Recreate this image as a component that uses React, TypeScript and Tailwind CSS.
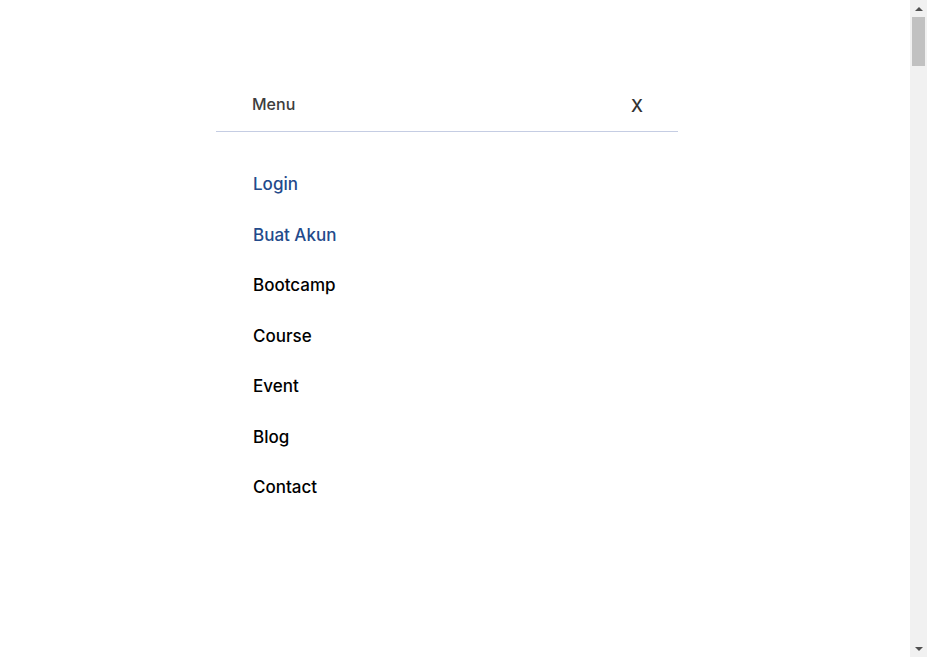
import React from "react";

const items = [
  { label: "Login", accent: true },
  { label: "Buat Akun", accent: true },
  { label: "Bootcamp", accent: false },
  { label: "Course", accent: false },
  { label: "Event", accent: false },
  { label: "Blog", accent: false },
  { label: "Contact", accent: false },
];

const Scrollbar = () => (
  <div className="w-[17px] h-full bg-[#f1f1f1] flex flex-col items-center">
    <div className="h-[17px] flex items-center justify-center">
      <div className="w-0 h-0 border-l-[4px] border-r-[4px] border-b-[4px] border-l-transparent border-r-transparent border-b-[#505050]" />
    </div>
    <div className="w-[13px] h-[49px] bg-[#c1c1c1]" />
    <div className="flex-1" />
    <div className="h-[17px] flex items-center justify-center">
      <div className="w-0 h-0 border-l-[4px] border-r-[4px] border-t-[4px] border-l-transparent border-r-transparent border-t-[#505050]" />
    </div>
  </div>
);

const App = () => {
  return (
    <div className="h-screen flex bg-white font-['Inter','Noto_Sans',sans-serif] overflow-hidden">
      <div className="flex-1 pt-[80px] pl-[216px]">
        <div className="w-[462px]">
          <div className="flex items-center justify-between h-[52px] px-[36px] border-b border-b-[#c5cde3]">
            <span className="text-[16px] font-medium text-[#3d3d3d] -mt-[4px]">Menu</span>
            <button className="text-[17px] font-medium text-[#333] leading-none mt-[2px] -mr-[1px]">X</button>
          </div>
          <ul className="flex flex-col gap-[26.5px] pt-[40px] px-[37px]">
            {items.map((item) => (
              <li
                key={item.label}
                className={`text-[17px] leading-6 font-medium ${item.accent ? "text-[#234a8b]" : "text-black"}`}
              >
                {item.label}
              </li>
            ))}
          </ul>
        </div>
      </div>
      <Scrollbar />
    </div>
  );
};

export default App;
